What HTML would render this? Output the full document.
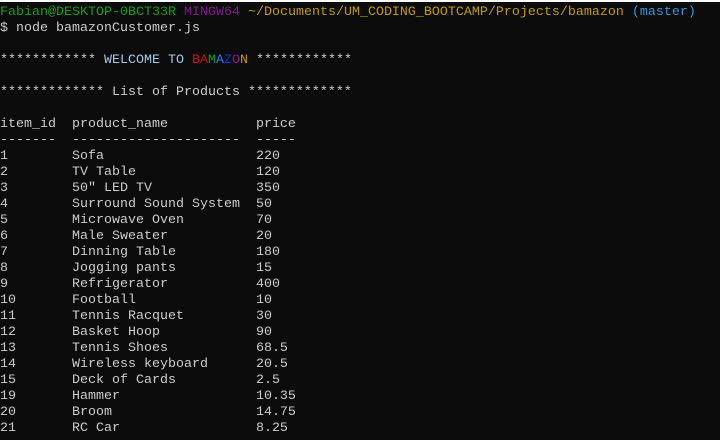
<!DOCTYPE html><html><head><style>
html,body{margin:0;padding:0;background:#0c0c0c;width:720px;height:440px;overflow:hidden}
.top{height:2px;background:#fff}
pre{margin:0;padding:3px 0 0 0;font-family:"Liberation Mono",monospace;font-size:13.33px;line-height:16px;color:#cccccc;letter-spacing:0}
.g{color:#13a10e}.p{color:#881798}.y{color:#c19c00}.b{color:#3a96dd}.r{color:#c50f1f}.db{color:#3b78ff}.bl{color:#0037da}
</style></head><body><div class="top"></div><pre><span class="g">Fabian@DESKTOP-0BCT33R</span> <span class="p">MINGW64</span> <span class="y">~/Documents/UM_CODING_BOOTCAMP/Projects/bamazon</span> <span class="b">(master)</span>
$ node bamazonCustomer.js

************ <span style="color:#a8c8e8">WELCOME TO</span> <span class="r">BA</span><span class="g">M</span><span class="db">A</span><span class="bl">Z</span><span class="p">O</span><span class="y">N</span> ************

************* List of Products *************

item_id  product_name           price
-------  ---------------------  -----
1        Sofa                   220
2        TV Table               120
3        50" LED TV             350
4        Surround Sound System  50
5        Microwave Oven         70
6        Male Sweater           20
7        Dinning Table          180
8        Jogging pants          15
9        Refrigerator           400
10       Football               10
11       Tennis Racquet         30
12       Basket Hoop            90
13       Tennis Shoes           68.5
14       Wireless keyboard      20.5
15       Deck of Cards          2.5
19       Hammer                 10.35
20       Broom                  14.75
21       RC Car                 8.25
</pre></body></html>
